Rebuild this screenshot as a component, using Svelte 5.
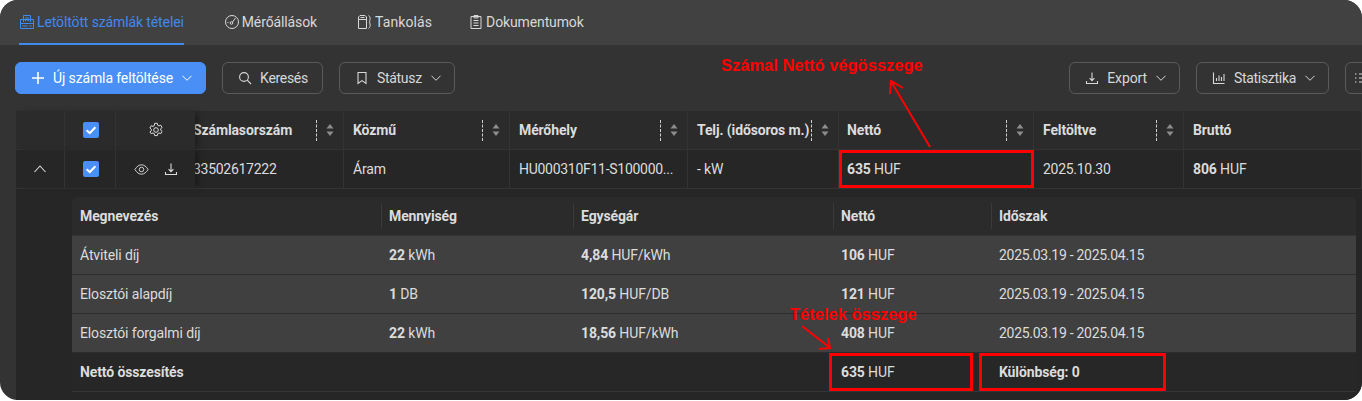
<script>
  const tabs = [
    { label: 'Letöltött számlák tételei', icon: 'invoice', active: true },
    { label: 'Mérőállások', icon: 'gauge' },
    { label: 'Tankolás', icon: 'fuel' },
    { label: 'Dokumentumok', icon: 'clipboard' },
  ];

  const columns = [
    { label: 'Számlasorszám', value: '33502617222', width: 149, first: true, num: true },
    { label: 'Közmű', value: 'Áram', width: 166 },
    { label: 'Mérőhely', value: 'HU000310F11-S100000...', width: 178, num: true },
    { label: 'Telj. (idősoros m.)', value: '- kW', width: 151 },
    { label: 'Nettó', strong: '635', value: 'HUF', width: 195, snug: true },
    { label: 'Feltöltve', value: '2025.10.30', width: 150, num: true },
    { label: 'Bruttó', strong: '806', value: 'HUF', width: 178, nosort: true },
  ];

  const items = [
    { name: 'Átviteli díj', qty: '22', unit: 'kWh', price: '4,84', priceUnit: 'HUF/kWh', net: '106' },
    { name: 'Elosztói alapdíj', qty: '1', unit: 'DB', price: '120,5', priceUnit: 'HUF/DB', net: '121' },
    { name: 'Elosztói forgalmi díj', qty: '22', unit: 'kWh', price: '18,56', priceUnit: 'HUF/kWh', net: '408' },
  ];
  const period = '2025.03.19 - 2025.04.15';
</script>

{#snippet chevron()}
  <svg class="chev" viewBox="0 0 12 12" width="12" height="12"><path d="M1.500 3.800 6 8.300 10.500 3.800" fill="none" stroke="currentColor" stroke-width="1"/></svg>
{/snippet}

{#snippet check()}
  <span class="check"><svg viewBox="0 0 16 16" width="16" height="16"><path d="M3.600 8.200 6.800 11 12.400 5.200" fill="none" stroke="#fff" stroke-width="2"/></svg></span>
{/snippet}

{#snippet tabIcon(name)}
  <svg viewBox="0 0 16 16" width="16" height="16" fill="none" stroke="currentColor" stroke-width="1">
    {#if name === 'invoice'}
      <path d="M1.500 5.500h13v9h-13z M4.500 8V1.500h7V8 M6 4h4 M6 6.500h1.500 M8.500 6.500H10 M1.500 9.500h13 M3.500 12h5 M10.500 12h2"/>
    {:else if name === 'gauge'}
      <circle cx="8" cy="8" r="6.500"/><circle cx="7.500" cy="9" r="1.300"/><path d="M8.500 8 11.500 4 M3.500 8.500h1"/>
    {:else if name === 'fuel'}
      <path d="M1.500 14.500V3L3 1.500h5L9.500 3v11.500z M1.500 5.500h8 M3.500 3.500h4 M11.500 1.500c1.500 1 2 2.500 1.500 4-.5 1.500-.5 3 0 4.500.5 1.800 0 3.500-1.500 4.500"/>
    {:else}
      <path d="M3 2.500h10v12H3z M6 1.500h4v2.400H6z M5.500 6.500h5 M5.500 9h5 M5.500 11.500h5"/>
    {/if}
  </svg>
{/snippet}

<div class="page">
  <div class="window">
    <nav class="tabs">
      {#each tabs as tab}
        <div class="tab" class:active={tab.active}>
          {@render tabIcon(tab.icon)}
          <span>{tab.label}</span>
        </div>
      {/each}
    </nav>

    <div class="toolbar">
      <button class="btn primary">
        <svg viewBox="0 0 14 14" width="14" height="14"><path d="M7 1v12M1 7h12" stroke="#fff" stroke-width="1.600"/></svg>
        <span>Új számla feltöltése</span>
        {@render chevron()}
      </button>
      <button class="btn narrow">
        <svg viewBox="0 0 14 14" width="14" height="14" fill="none" stroke="currentColor" stroke-width="1.100"><circle cx="6" cy="6" r="4.400"/><path d="M9.200 9.200 13 13"/></svg>
        <span>Keresés</span>
      </button>
      <button class="btn narrow">
        <svg viewBox="0 0 14 14" width="14" height="14" fill="none" stroke="currentColor" stroke-width="1.100"><path d="M3 1.500h8v11L7 9.600 3 12.500z"/></svg>
        <span>Státusz</span>
        {@render chevron()}
      </button>
      <div class="spacer"></div>
      <button class="btn">
        <svg viewBox="0 0 14 14" width="14" height="14" fill="none" stroke="currentColor" stroke-width="1.100"><path d="M7 1.500v8M4.600 7.200 7 9.600l2.400-2.400M1.500 10v2.500h11V10"/></svg>
        <span>Export</span>
        {@render chevron()}
      </button>
      <button class="btn narrow">
        <svg viewBox="0 0 14 14" width="14" height="14" fill="none" stroke="currentColor" stroke-width="1.100"><path d="M1.500 1.500v11h11M4.500 10V7M7 10V4.500M9.500 10V6M12 10V3"/></svg>
        <span>Statisztika</span>
        {@render chevron()}
      </button>
      <button class="btn cut" aria-label="Oszlopok">
        <svg viewBox="0 0 14 14" width="14" height="14" fill="none" stroke="currentColor" stroke-width="1.100"><path d="M1 3h1.500M1 7h1.500M1 11h1.500M5 3h8M5 7h8M5 11h8"/></svg>
      </button>
    </div>

    <div class="table">
      <div class="row head">
        <div class="fixed">
          <div class="cell c1"></div>
          <div class="cell c2">{@render check()}</div>
          <div class="cell c3">
            <svg viewBox="0 0 16 16" width="16" height="16" fill="none" stroke="currentColor" stroke-width="1"><circle cx="8" cy="8" r="2.300"/><path d="M6.700 1.300h2.600l.4 1.900 1.300.7 1.800-.7 1.300 2.300-1.400 1.200v1.500l1.400 1.200-1.300 2.300-1.800-.7-1.300.7-.4 1.900H6.700l-.4-1.900-1.300-.7-1.800.7L1.900 10l1.400-1.200V7.300L1.900 6l1.300-2.300 1.800.7 1.300-.7z"/></svg>
          </div>
        </div>
        {#each columns as col}
          <div class="cell data" class:first={col.first} class:snug={col.snug} style="width:{col.width}px">
            <span class="text">{col.label}</span>
            {#if !col.nosort}
              <span class="grip"></span>
              <svg class="sort" viewBox="0 0 8 14" width="8" height="14"><path d="M4 1 7.500 5.600h-7zM4 13 .5 8.400h7z" fill="#8d8d8d"/></svg>
            {/if}
          </div>
        {/each}
      </div>

      <div class="row body">
        <div class="fixed">
          <div class="cell c1">
            <svg viewBox="0 0 14 14" width="14" height="14"><path d="M1.500 10 7 4l5.500 6" fill="none" stroke="currentColor" stroke-width="1.100"/></svg>
          </div>
          <div class="cell c2">{@render check()}</div>
          <div class="cell c3 actions">
            <svg viewBox="0 0 16 16" width="15" height="15" fill="none" stroke="currentColor" stroke-width="1"><path d="M1 8c2-3.400 4.400-5 7-5s5 1.600 7 5c-2 3.400-4.400 5-7 5s-5-1.600-7-5z"/><circle cx="8" cy="8" r="2.400"/></svg>
            <svg viewBox="0 0 14 14" width="14" height="14" fill="none" stroke="currentColor" stroke-width="1.100"><path d="M7 1.500v8M4.600 7.200 7 9.600l2.400-2.400M1.500 10v2.500h11V10"/></svg>
          </div>
        </div>
        {#each columns as col}
          <div class="cell data" class:first={col.first} class:snug={col.snug} style="width:{col.width}px">
            <span class="text" class:num={col.num}>
              {#if col.strong}<b>{col.strong}</b>{' '}{/if}{col.value}
            </span>
          </div>
        {/each}
      </div>

      <div class="detail">
        <table>
          <colgroup>
            <col style="width:309px" /><col style="width:192px" /><col style="width:260px" /><col style="width:158px" /><col />
          </colgroup>
          <thead>
            <tr>
              <th>Megnevezés</th><th>Mennyiség</th><th>Egységár</th><th>Nettó</th><th>Időszak</th>
            </tr>
          </thead>
          <tbody>
            {#each items as item}
              <tr>
                <td>{item.name}</td>
                <td><b>{item.qty}</b> {item.unit}</td>
                <td><b>{item.price}</b> {item.priceUnit}</td>
                <td><b>{item.net}</b> HUF</td>
                <td class="num">{period}</td>
              </tr>
            {/each}
          </tbody>
          <tfoot>
            <tr>
              <td colspan="3"><b>Nettó összesítés</b></td>
              <td><b>635</b> HUF</td>
              <td><b>Különbség: 0</b></td>
            </tr>
          </tfoot>
        </table>
      </div>
    </div>
  </div>

  <div class="note note-top">Számal Nettó végösszege</div>
  <div class="note note-sum">Tételek összege</div>
  <div class="box box-a"></div>
  <div class="box box-b"></div>
  <div class="box box-c"></div>
  <svg class="arrows" viewBox="0 0 1362 401" width="1362" height="401" fill="none" stroke="#f00" stroke-width="2">
    <path d="M930 147 892 83M890 94 891 81 903 88"/>
    <path d="M802 326 829 347M819 349 830 348 828 338"/>
  </svg>
</div>

<style>
  :global(body) {
    margin: 0;
    background: #fff;
  }
  .page {
    position: relative;
    width: 1362px;
    height: 401px;
    overflow: hidden;
    font-family: Roboto, "Liberation Sans", sans-serif;
    font-size: 14px;
    letter-spacing: -0.12px;
    color: #dcdcdc;
  }
  .window {
    height: 400px;
    border-radius: 18px;
    overflow: hidden;
    background: #333;
    display: flex;
    flex-direction: column;
  }
  .tabs {
    height: 45px;
    flex: none;
    box-sizing: border-box;
    background: #414141;
    display: flex;
    padding-left: 19px;
    gap: 39px;
  }
  .tab {
    display: flex;
    align-items: center;
    gap: 2px;
    height: 45px;
    box-sizing: border-box;
    padding-bottom: 2px;
    color: #d8d8d8;
  }
  .tab:nth-child(2) {
    margin-left: 1px;
  }
  .tab:nth-child(3) {
    margin-left: 1px;
    letter-spacing: 0.1px;
  }
  .tab:nth-child(4) {
    margin-left: -3px;
  }
  .tab.active {
    color: #4089ee;
    border-bottom: 2px solid #4089ee;
    padding-bottom: 0;
  }
  .toolbar {
    height: 66px;
    flex: none;
    box-sizing: border-box;
    padding: 17px 0 17px 15px;
    display: flex;
    gap: 16px;
  }
  .spacer {
    flex: 1;
  }
  .btn {
    height: 32px;
    box-sizing: border-box;
    display: flex;
    align-items: center;
    gap: 8px;
    padding: 0 14px 0 15px;
    border: 1px solid #5a5a5a;
    border-radius: 6px;
    background: transparent;
    color: #d8d8d8;
    font: inherit;
    letter-spacing: inherit;
    flex: none;
  }
  .btn.narrow {
    letter-spacing: -0.3px;
  }
  .btn.primary {
    background: #4a8ff5;
    border-color: #4a8ff5;
    color: #fff;
  }
  .btn.cut {
    padding: 0 8px;
    margin-right: -15px;
  }
  .chev {
    flex: none;
    margin-right: -2px;
  }
  .table {
    flex: 1;
    margin-left: 16px;
    background: #262626;
    min-height: 0;
  }
  .row {
    display: flex;
    height: 39px;
    box-sizing: border-box;
    border-bottom: 1px solid #333;
  }
  .row.head {
    background: #2b2b2b;
    font-weight: 700;
  }
  .fixed {
    display: flex;
    flex: none;
    position: relative;
    z-index: 1;
    background: inherit;
    box-shadow: 5px 0 6px -2px rgba(0, 0, 0, 0.35);
  }
  .row.body .fixed {
    background: #262626;
  }
  .cell {
    display: flex;
    align-items: center;
    box-sizing: border-box;
    border-right: 1px solid #333;
    flex: none;
    overflow: hidden;
  }
  .c1 {
    width: 49px;
    justify-content: center;
  }
  .c2 {
    width: 51px;
    justify-content: center;
    padding-left: 1px;
  }
  .c3 {
    width: 79px;
    justify-content: center;
    border-right: 0;
  }
  .actions {
    gap: 15px;
  }
  .data {
    padding: 0 9px;
    position: relative;
  }
  .data.first {
    padding-left: 0;
  }
  .data.snug {
    padding-left: 8px;
  }
  .data.first .text {
    margin-left: -2px;
  }
  .text {
    flex: 1;
    white-space: nowrap;
    min-width: 0;
  }
  .num {
    letter-spacing: -0.28px;
  }
  .grip {
    width: 0;
    height: 21px;
    border-left: 1px dashed #cfcfcf;
    margin: 0 9px 0 0;
    flex: none;
  }
  .sort {
    flex: none;
  }
  b {
    font-weight: 700;
  }
  .detail {
    margin: 8px 0 0 56px;
  }
  table {
    width: 1284px;
    table-layout: fixed;
    border-collapse: separate;
    border-spacing: 0;
  }
  th {
    height: 39px;
    padding: 0 8px;
    box-sizing: border-box;
    text-align: left;
    background: #2b2b2b;
    font-weight: 700;
    border-bottom: 1px solid #333;
  }
  th + th {
    background: linear-gradient(#3a3a3a, #3a3a3a) left center / 1px 26px no-repeat, #2b2b2b;
  }
  th:first-child {
    border-top-left-radius: 6px;
  }
  th:last-child {
    border-top-right-radius: 6px;
  }
  td {
    height: 39px;
    padding: 0 8px;
    box-sizing: border-box;
    border-bottom: 1px solid #2d2d2d;
  }
  tbody td {
    background: #404040;
  }
  tfoot td {
    background: #272727;
    border-bottom: 1px solid #353535;
  }
  .check {
    width: 16px;
    height: 16px;
    border-radius: 2px;
    background: #4a8ff5;
    display: block;
  }
  .check svg {
    display: block;
  }
  .note {
    position: absolute;
    color: #f00;
    font-family: "Liberation Sans", sans-serif;
    font-weight: 700;
    font-size: 16.5px;
    letter-spacing: 0;
    line-height: 18px;
  }
  .note-top {
    left: 721px;
    top: 56px;
  }
  .note-sum {
    left: 790px;
    top: 305px;
  }
  .box {
    position: absolute;
    border: 3px solid #f00;
    box-sizing: border-box;
  }
  .box-a {
    left: 839px;
    top: 150px;
    width: 195px;
    height: 38px;
  }
  .box-b {
    left: 829px;
    top: 353px;
    width: 144px;
    height: 38px;
  }
  .box-c {
    left: 979px;
    top: 353px;
    width: 187px;
    height: 38px;
  }
  .arrows {
    position: absolute;
    left: 0;
    top: 0;
    pointer-events: none;
  }
</style>
